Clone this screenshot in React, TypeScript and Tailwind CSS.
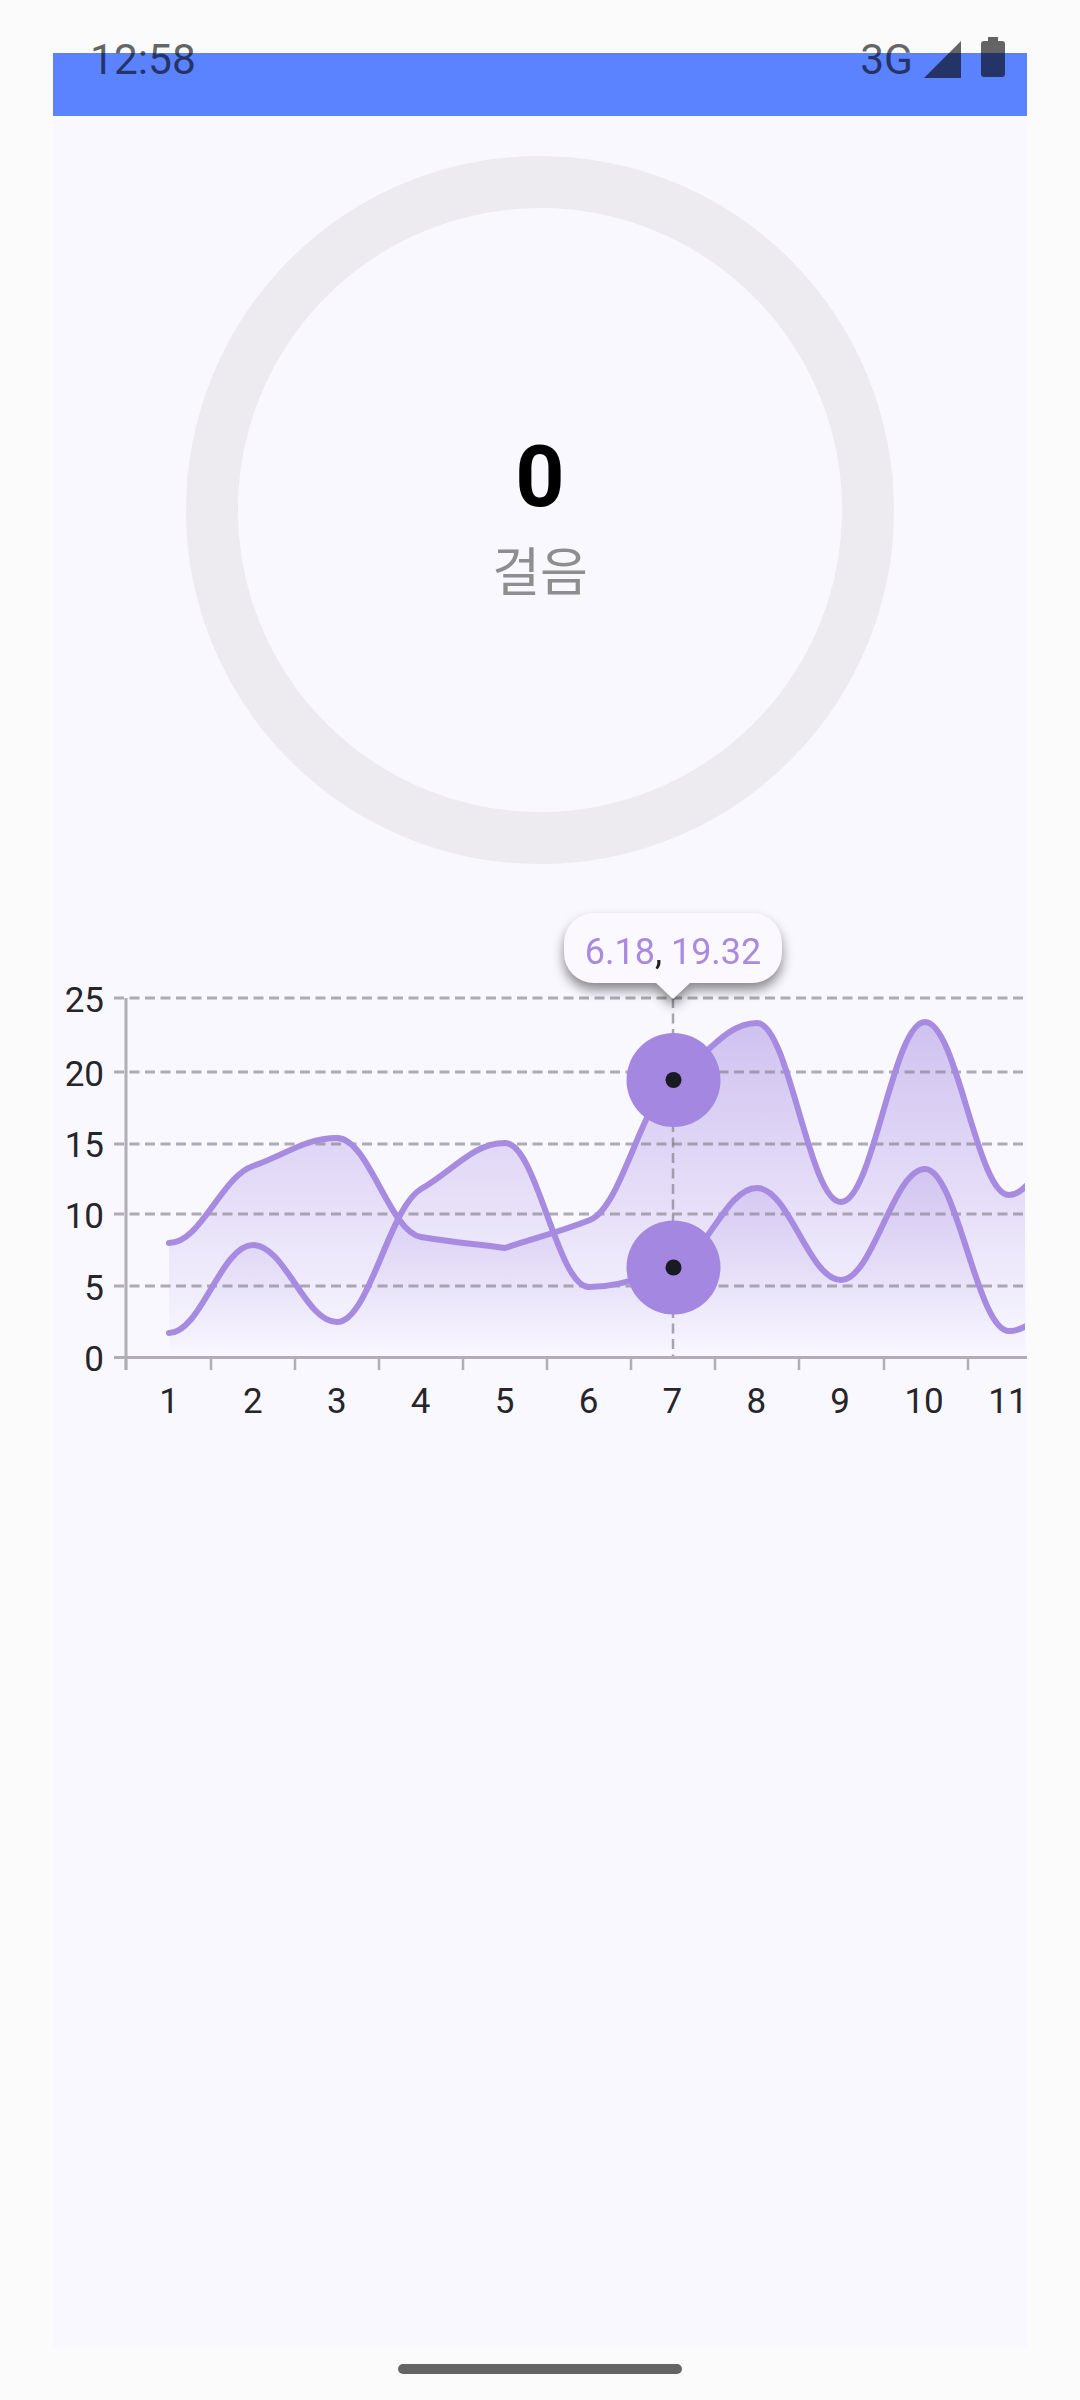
const LINE_COLOR = "#a78be0"

type Point = [number, number]

// points are in page pixels, the svg viewBox below is offset to match
const upper: Point[] = [
    [169, 1243], [253, 1166], [337, 1138], [421, 1237], [505, 1248], [590, 1220],
    [673, 1080], [757, 1023], [841, 1202], [925, 1022], [1009, 1195], [1093, 1100],
]
const lower: Point[] = [
    [169, 1333], [253, 1245], [337, 1322], [421, 1189], [505, 1143], [589, 1287],
    [673, 1268], [757, 1188], [841, 1280], [925, 1169], [1009, 1331], [1093, 1280],
]

const gridRows = [
    { label: "25", y: 998, base: 1012 },
    { label: "20", y: 1072, base: 1086 },
    { label: "15", y: 1144, base: 1157 },
    { label: "10", y: 1214, base: 1228 },
    { label: "5", y: 1286, base: 1300 },
    { label: "0", y: 1357, base: 1371 },
]
const ticks = [126, 211, 295, 379, 463, 547, 631, 715, 799, 884, 968]
const xLabels = [1, 2, 3, 4, 5, 6, 7, 8, 9, 10, 11]

// corners: indexes where the line kinks instead of easing out flat
function smoothPath(pts: Point[], corners: number[] = []) {
    const n = pts.length
    const chord = (i: number) => (pts[i + 1][1] - pts[i][1]) / 84
    const slopes = pts.map((_, i) => {
        if (i === 0 || i === n - 1) return 0
        const a = chord(i - 1)
        const b = chord(i)
        if (a * b <= 0) return 0
        return (1.4 * a * b) / (a + b)
    })
    let d = `M${pts[0][0]} ${pts[0][1]}`
    for (let i = 0; i < n - 1; i++) {
        const h = (pts[i + 1][0] - pts[i][0]) * 0.38
        const out = corners.includes(i) ? chord(i) : slopes[i]
        const into = corners.includes(i + 1) ? chord(i) : slopes[i + 1]
        d += ` C${pts[i][0] + h} ${pts[i][1] + out * h} ${pts[i + 1][0] - h} ${pts[i + 1][1] - into * h} ${pts[i + 1][0]} ${pts[i + 1][1]}`
    }
    return d
}

const upperLine = smoothPath(upper, [4])
const lowerLine = smoothPath(lower)
const closeArea = (line: string, pts: Point[]) => `${line} L${pts[pts.length - 1][0]} 1357 L${pts[0][0]} 1357 Z`

function Chart() {
    return (
        <div className="relative mt-[36px] h-[530px]">
            <svg width="974" height="530" viewBox="53 900 974 530" className="block">
                <defs>
                    <linearGradient id="fillUpper" gradientUnits="userSpaceOnUse" x1="0" y1="1023" x2="0" y2="1357">
                        <stop offset="0" stopColor="#a78be0" stopOpacity="0.5" />
                        <stop offset="1" stopColor="#a78be0" stopOpacity="0" />
                    </linearGradient>
                    <linearGradient id="fillLower" gradientUnits="userSpaceOnUse" x1="0" y1="1143" x2="0" y2="1357">
                        <stop offset="0" stopColor="#a78be0" stopOpacity="0.3" />
                        <stop offset="1" stopColor="#a78be0" stopOpacity="0" />
                    </linearGradient>
                    <clipPath id="plot">
                        <rect x="100" y="980" width="925" height="390" />
                    </clipPath>
                </defs>

                <g clipPath="url(#plot)">
                    <path d={closeArea(upperLine, upper)} fill="url(#fillUpper)" />
                    <path d={closeArea(lowerLine, lower)} fill="url(#fillLower)" />
                </g>

                {/* grid */}
                {gridRows.slice(0, 5).map((row) => (
                    <line key={row.label} x1="114" x2="1025" y1={row.y} y2={row.y} stroke="#85808f" strokeOpacity="0.65" strokeWidth="3" strokeDasharray="10 5.5" />
                ))}
                <line x1="673" x2="673" y1="998" y2="1357" stroke="#85808f" strokeOpacity="0.7" strokeWidth="2.5" strokeDasharray="10 5.5" />

                {/* axes */}
                <line x1="114" x2="1027" y1="1357.5" y2="1357.5" stroke="#b0adb6" strokeWidth="3" />
                <line x1="126" x2="126" y1="998" y2="1370" stroke="#b0adb6" strokeWidth="3" />
                {ticks.map((x) => (
                    <line key={x} x1={x} x2={x} y1="1357" y2="1370" stroke="#b0adb6" strokeWidth="2.5" />
                ))}

                <g clipPath="url(#plot)">
                    <path d={upperLine} fill="none" stroke={LINE_COLOR} strokeWidth="6" strokeLinecap="round" />
                    <path d={lowerLine} fill="none" stroke={LINE_COLOR} strokeWidth="6" strokeLinecap="round" />
                </g>

                {gridRows.map((row) => (
                    <text key={row.label} x="104" y={row.base} textAnchor="end" fontSize="35" fill="#25252a">
                        {row.label}
                    </text>
                ))}
                {xLabels.map((n, i) => (
                    <text key={n} x={169 + i * 83.9} y="1413" textAnchor="middle" fontSize="35" fill="#25252a">
                        {n}
                    </text>
                ))}

                {[1080, 1267.5].map((cy) => (
                    <g key={cy}>
                        <circle cx="673.5" cy={cy} r="47" fill="#a487e0" />
                        <circle cx="673.5" cy={cy} r="8" fill="#1a1a22" />
                    </g>
                ))}
            </svg>

            {/* tooltip */}
            <div className="absolute left-[511px] top-[13px] flex flex-col items-center drop-shadow-[0_7px_6px_rgba(0,0,0,0.45)]">
                <div className="flex h-[70px] w-[218px] items-center justify-center rounded-[30px] bg-[#fbf9ff] pt-[7px] text-[36px] text-[#a78be0]">
                    6.18<span className="text-[#1f1f24]">,</span>&nbsp;19.32
                </div>
                <div className="h-[16px] w-[34px] bg-[#fbf9ff] [clip-path:polygon(0_0,100%_0,50%_100%)]" />
            </div>
        </div>
    )
}

export default function App() {
    return (
        <div className="relative h-[2400px] w-[1080px] overflow-hidden bg-[#fbfbfb] px-[53px] pt-[53px] [font-family:Roboto,sans-serif]">
            <div className="flex h-[2294px] flex-col bg-[#f9f8ff]">
                <div className="h-[63px] bg-[#5b82ff]" />

                {/* step ring */}
                <div className="mx-auto mt-[40px] flex h-[708px] w-[708px] flex-col items-center justify-center rounded-full border-[52px] border-[#edebf0] pt-[15px]">
                    <div className="mt-[-8px] text-[86px] leading-[100px] font-bold text-black">0</div>
                    <div className="mt-[11px] text-[52px] leading-[62px] text-[#8e8e8e] [font-family:'Noto_Sans_CJK_KR',sans-serif]">걸음</div>
                </div>

                <Chart />
            </div>

            {/* status bar sits over the blue bar */}
            <div className="absolute top-[36px] left-[90px] right-[75px] flex items-center justify-between text-[42.5px] leading-[48px] text-black/60">
                <span>12:58</span>
                <div className="flex items-center">
                    <span>3G</span>
                    <svg width="37" height="37" viewBox="0 0 37 37" className="ml-[11px] mt-[-2px]">
                        <path d="M37 0V37H0Z" fill="currentColor" />
                    </svg>
                    <svg width="24" height="40" viewBox="0 0 24 40" className="ml-[20px] mt-[-6px]">
                        <path d="M7 0H17V4H21Q24 4 24 7V37Q24 40 21 40H3Q0 40 0 37V7Q0 4 3 4H7Z" fill="currentColor" />
                    </svg>
                </div>
            </div>

            <div className="absolute top-[2364px] left-[398px] h-[10px] w-[284px] rounded-full bg-[#646464]" />
        </div>
    )
}
